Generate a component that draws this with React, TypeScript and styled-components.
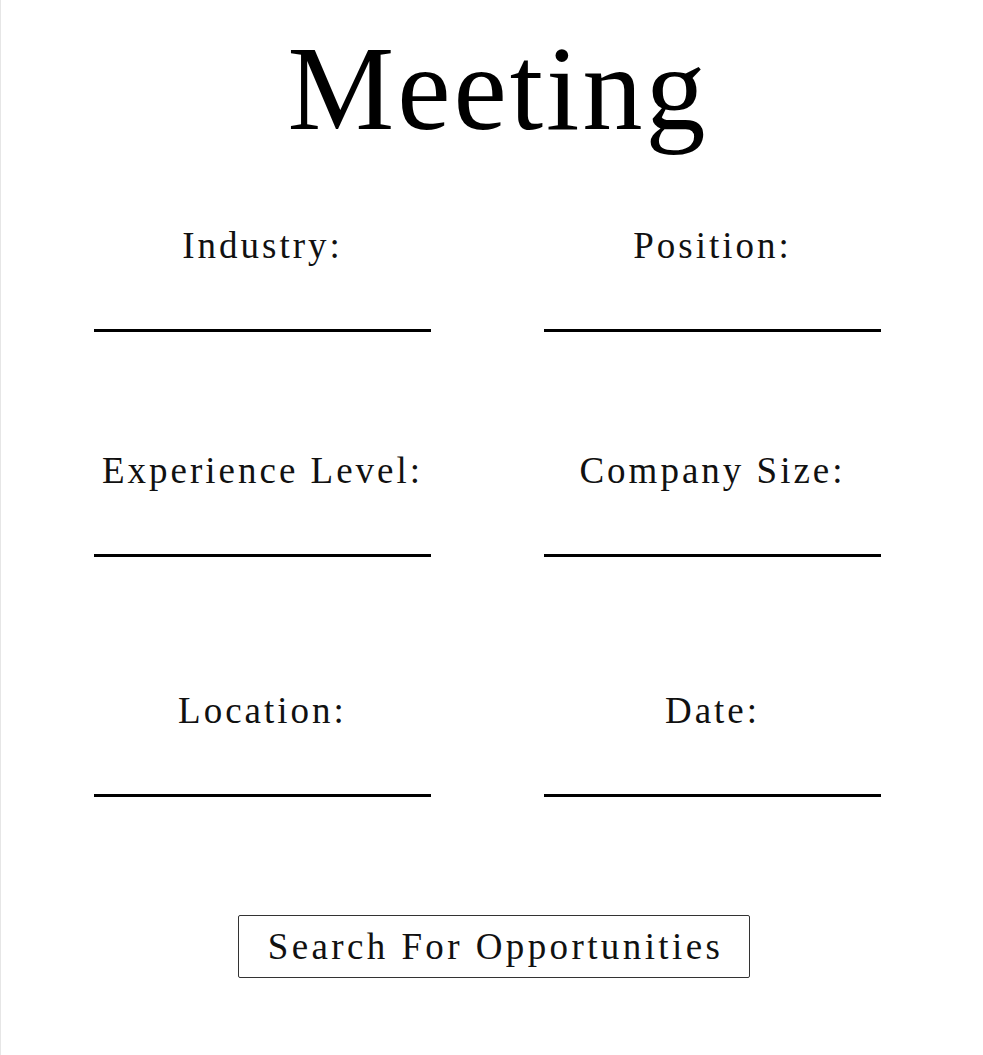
import React from "react";
import styled, { createGlobalStyle } from "styled-components";

const GlobalStyle = createGlobalStyle`
  html, body {
    margin: 0;
    padding: 0;
    background: #ffffff;
  }
  body {
    font-family: "Liberation Serif", "Times New Roman", serif;
    color: #000;
  }
`;

const Page = styled.main`
  box-sizing: border-box;
  width: 983px;
  min-height: 1055px;
  padding-top: 19px;
  border-left: 1px solid #e6e6e6;
  display: flex;
  flex-direction: column;
`;

const Title = styled.h1`
  margin: 0;
  padding-left: 12px;
  text-align: center;
  font-family: "Liberation Serif", serif;
  font-weight: 400;
  font-size: 120px;
  line-height: 140px;
  letter-spacing: 3px;
  color: #000;
`;

const Form = styled.form`
  margin: 67px 0 0 93px;
  display: grid;
  grid-template-columns: 337px 337px;
  column-gap: 113px;
  row-gap: 119px;
`;

const Field = styled.div<{ $shift?: number }>`
  display: flex;
  flex-direction: column;
  align-items: center;
  margin-top: ${(p) => p.$shift ?? 0}px;
`;

const Label = styled.label`
  font-family: "Liberation Serif", serif;
  font-size: 37px;
  line-height: 40px;
  letter-spacing: 3px;
  color: #111;
  text-align: center;
  white-space: nowrap;
`;

const Underline = styled.input`
  box-sizing: border-box;
  width: 337px;
  height: 66px;
  border: none;
  border-bottom: 3px solid #000;
  background: transparent;
  outline: none;
  font-family: "Liberation Serif", serif;
  font-size: 28px;
  padding: 0;
`;

const Actions = styled.div`
  display: flex;
  justify-content: center;
  margin-top: 118px;
  padding-left: 4px;
`;

const SearchButton = styled.button`
  box-sizing: border-box;
  height: 63px;
  padding: 0 26px 0 29px;
  display: flex;
  align-items: center;
  background: #fff;
  border: 1px solid #333;
  border-radius: 2px;
  font-family: "Liberation Serif", serif;
  font-size: 37px;
  line-height: 40px;
  letter-spacing: 3.4px;
  color: #111;
  cursor: pointer;
`;

const fields = [
  { id: "industry", label: "Industry:", shift: 0 },
  { id: "position", label: "Position:", shift: 0 },
  { id: "experience", label: "Experience Level:", shift: 0 },
  { id: "size", label: "Company Size:", shift: 0 },
  { id: "location", label: "Location:", shift: 15 },
  { id: "date", label: "Date:", shift: 15 },
];

export default function App() {
  return (
    <>
      <GlobalStyle />
      <Page>
        <Title>Meeting</Title>
        <Form onSubmit={(e) => e.preventDefault()}>
          {fields.map((f) => (
            <Field key={f.id} $shift={f.shift}>
              <Label htmlFor={f.id}>{f.label}</Label>
              <Underline id={f.id} type="text" />
            </Field>
          ))}
        </Form>
        <Actions>
          <SearchButton type="button">Search For Opportunities</SearchButton>
        </Actions>
      </Page>
    </>
  );
}
